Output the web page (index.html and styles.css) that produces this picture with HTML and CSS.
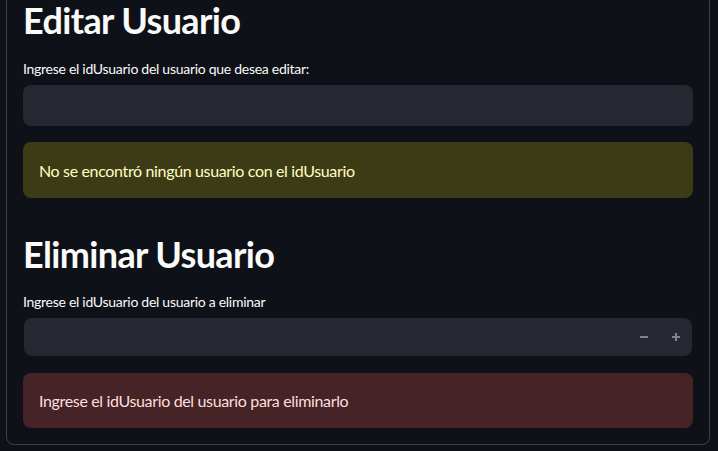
FILE: index.html
```html
<!DOCTYPE html>
<html lang="es">
<head>
<meta charset="utf-8">
<title>Usuarios</title>
<link rel="stylesheet" href="styles.css">
</head>
<body>
<div class="panel">
  <h2 class="header">Editar Usuario</h2>
  <div class="field">
    <label class="label">Ingrese el idUsuario del usuario que desea editar:</label>
    <div class="input text-input"></div>
  </div>
  <div class="alert warning">No se encontró ningún usuario con el idUsuario</div>

  <h2 class="header second">Eliminar Usuario</h2>
  <div class="field field-second">
    <label class="label">Ingrese el idUsuario del usuario a eliminar</label>
    <div class="input number-input">
      <span class="step">
        <svg width="10" height="10" viewBox="0 0 10 10"><path d="M1 5H9" stroke="#7f8290" stroke-width="2"/></svg>
      </span>
      <span class="step">
        <svg width="10" height="10" viewBox="0 0 10 10"><path d="M1 5H9M5 1V9" stroke="#7f8290" stroke-width="2"/></svg>
      </span>
    </div>
  </div>
  <div class="alert error">Ingrese el idUsuario del usuario para eliminarlo</div>
</div>
</body>
</html>
```

FILE: styles.css
```css
html, body {
  margin: 0;
  padding: 0;
  background: #0e1117;
  color: #fafafa;
  font-family: "Lato", "Open Sans", sans-serif;
}

.panel {
  width: 704px;
  margin-left: 6px;
  border: 1px solid #3d3f47;
  border-top: none;
  border-radius: 0 0 8px 8px;
  padding: 0 16px 16px 16px;
  box-sizing: border-box;
  display: flex;
  flex-direction: column;
}

.header {
  margin: 0;
  font-size: 36px;
  font-weight: 700;
  line-height: 40px;
  letter-spacing: -0.65px;
  height: 40px;
}

.second {
  margin-top: 36px;
}

.field {
  display: flex;
  flex-direction: column;
  margin-top: 19px;
}

.field-second {
  margin-top: 18px;
}

.label {
  font-size: 14px;
  line-height: 20px;
  height: 20px;
  margin-bottom: 6px;
  letter-spacing: -0.28px;
}

.input {
  background: #262730;
  border-radius: 8px;
  box-sizing: border-box;
}

.text-input {
  height: 41px;
}

.number-input {
  height: 38px;
  margin: 0 1px;
  display: flex;
  justify-content: flex-end;
  align-items: center;
}

.step {
  width: 32px;
  height: 38px;
  display: flex;
  align-items: center;
  justify-content: center;
}

.step svg {
  display: block;
}

.alert {
  margin-top: 16px;
  height: 56px;
  border-radius: 8px;
  padding: 0 16px;
  display: flex;
  align-items: center;
  font-size: 16px;
  letter-spacing: -0.35px;
  box-sizing: border-box;
}

.warning {
  background: #3d3b16;
  color: #ffffc2;
}

.error {
  margin-top: 17px;
  height: 55px;
  background: #452326;
  color: #ffdede;
}
```
